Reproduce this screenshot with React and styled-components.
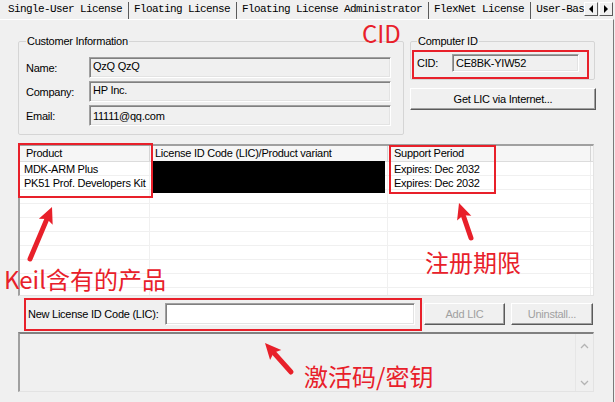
import React from 'react';
import styled, { createGlobalStyle } from 'styled-components';

const RED = '#e8202a';

const GlobalStyle = createGlobalStyle`
  body {
    margin: 0;
    background: #f0f0f0;
    font-family: "Liberation Sans", Arial, sans-serif;
    font-size: 11px;
    letter-spacing: -0.25px;
    color: #000;
  }
  #root {
    position: relative;
    width: 615px;
    height: 402px;
    overflow: hidden;
  }
`;

const Window = styled.div`
  width: 615px;
  height: 402px;
  display: flex;
  flex-direction: column;
`;

const TabStrip = styled.div`
  display: flex;
  height: 19px;
  padding-left: 3px;
`;

const TabList = styled.div`
  display: flex;
  width: 581px;
  overflow: hidden;
`;

const Tab = styled.div`
  flex: none;
  height: 17px;
  margin-top: 2px;
  line-height: 15px;
  padding: 0 6px 0 5px;
  font-family: "Liberation Mono", "DejaVu Sans Mono", monospace;
  font-size: 11px;
  letter-spacing: -0.6px;
  white-space: nowrap;
  border-right: 1px solid #5a5a5a;
`;

const ScrollButtons = styled.div`
  display: flex;
  gap: 1px;
  padding-top: 2px;
`;

const ScrollButton = styled.div`
  width: 14px;
  height: 14px;
  box-sizing: border-box;
  background: #f0f0f0;
  border: 1px solid;
  border-color: #fff #5a5a5a #5a5a5a #fff;
  display: flex;
  align-items: center;
  justify-content: center;
`;

const Triangle = styled.span`
  width: 0;
  height: 0;
  border-top: 4px solid transparent;
  border-bottom: 4px solid transparent;
  ${(p) => (p.$dir === 'left' ? 'border-right: 4px solid #000;' : 'border-left: 4px solid #000;')}
`;

const Page = styled.div`
  flex: 1;
  border-top: 1px solid #fff;
  border-right: 1px solid #7a7a7a;
  margin-right: 1px;
  padding: 15px 0 0 18px;
`;

const TopRow = styled.div`
  display: flex;
  gap: 6px;
  align-items: flex-start;
`;

const GroupBox = styled.fieldset`
  margin: 0;
  min-width: 0;
  box-sizing: border-box;
  width: ${(p) => p.$width}px;
  padding: ${(p) => p.$pad};
  border: 1px solid #d5d5d5;
  border-radius: 2px;
`;

const Legend = styled.legend`
  padding: 0 1px;
  line-height: 13px;
`;

const FieldGrid = styled.div`
  display: grid;
  grid-template-columns: ${(p) => p.$cols};
  row-gap: 3px;
  align-items: center;
`;

const Label = styled.span`
  white-space: nowrap;
`;

const ReadOnlyField = styled.div`
  height: ${(p) => p.$h}px;
  box-sizing: border-box;
  padding: ${(p) => p.$padTop}px 3px 0;
  line-height: 12px;
  background: #f0f0f0;
  border: 1px solid;
  border-color: #a0a0a0 #fff #fff #a0a0a0;
  box-shadow: inset 1px 1px 0 #808080, inset -1px -1px 0 #e3e3e3;
  white-space: nowrap;
`;

const RightColumn = styled.div`
  display: flex;
  flex-direction: column;
  width: 186px;
`;

const Button = styled.div`
  height: ${(p) => p.$h || 22}px;
  width: ${(p) => (p.$w ? `${p.$w}px` : 'auto')};
  margin-top: ${(p) => p.$mt || 0}px;
  margin-left: ${(p) => p.$ml || 0}px;
  box-sizing: border-box;
  background: #f0f0f0;
  border: 1px solid;
  border-color: #fff #5a5a5a #5a5a5a #fff;
  box-shadow: inset -1px -1px 0 #a0a0a0;
  display: flex;
  align-items: center;
  justify-content: center;
  color: ${(p) => (p.$disabled ? '#a0a0a0' : '#000')};
  white-space: nowrap;
`;

const ListView = styled.div`
  position: relative;
  margin-top: 9px;
  width: 576px;
  height: 152px;
  box-sizing: border-box;
  background: #fff;
  border-style: solid;
  border-width: 2px 1px 1px 2px;
  border-color: #a0a0a0 #e3e3e3 #e3e3e3 #a0a0a0;
  overflow: hidden;
  display: grid;
  grid-template-columns: 130px 238px 203px 1fr;
  grid-template-rows: 16px;
  grid-auto-rows: 14px;
  align-content: start;
`;

const HeaderCell = styled.div`
  box-sizing: border-box;
  background: #f6f6f6;
  border-right: 1px solid #d5d5d5;
  border-bottom: 1px solid #dcdcdc;
  padding-left: ${(p) => p.$pl || 6}px;
  line-height: 15px;
  white-space: nowrap;
  overflow: hidden;
`;

const Cell = styled.div`
  box-sizing: border-box;
  border-right: 1px solid #f0f0f0;
  border-bottom: 1px solid #f0f0f0;
  padding-left: ${(p) => p.$pl || 4}px;
  line-height: 14px;
  white-space: nowrap;
  overflow: hidden;
`;

const Redaction = styled.div`
  position: absolute;
  left: 133px;
  top: 15px;
  width: 232px;
  height: 32px;
  background: #000;
`;

const BottomRow = styled.div`
  display: flex;
  align-items: center;
  margin-top: 7px;
  padding-left: 10px;
  height: 22px;
`;

const LicLabel = styled.span`
  width: 137px;
  white-space: nowrap;
`;

const TextInput = styled.div`
  width: 250px;
  height: 22px;
  box-sizing: border-box;
  background: #fff;
  border: 1px solid;
  border-color: #a0a0a0 #fff #fff #a0a0a0;
  box-shadow: inset 1px 1px 0 #808080, inset -1px -1px 0 #e3e3e3;
`;

const LogBox = styled.div`
  margin-top: 7px;
  width: 576px;
  height: 60px;
  box-sizing: border-box;
  background: #f0f0f0;
  border-style: solid;
  border-width: 2px 1px 1px 2px;
  border-color: #808080 #e3e3e3 #e3e3e3 #a0a0a0;
  display: flex;
  justify-content: flex-end;
`;

const ScrollBar = styled.div`
  width: 17px;
  border-left: 1px solid #e6e6e6;
  display: flex;
  flex-direction: column;
  justify-content: space-between;
  align-items: center;
  padding: 9px 0 5px;
`;

const Overlay = styled.div`
  position: absolute;
  inset: 0;
  pointer-events: none;
`;

const RedBox = styled.div`
  position: absolute;
  left: ${(p) => p.$x}px;
  top: ${(p) => p.$y}px;
  width: ${(p) => p.$w}px;
  height: ${(p) => p.$h}px;
  box-sizing: border-box;
  border: 2px solid ${RED};
`;

const Note = styled.div`
  position: absolute;
  left: ${(p) => p.$x}px;
  top: ${(p) => p.$y}px;
  font-family: "Noto Sans CJK SC", "Noto Sans", sans-serif;
  font-size: ${(p) => p.$size || 24}px;
  line-height: 1;
  letter-spacing: 0;
  color: ${RED};
  white-space: nowrap;
`;

const ArrowSvg = styled.svg`
  position: absolute;
  left: 0;
  top: 0;
`;

const Chevron = ({ up }) => (
  <svg width="9" height="6" viewBox="0 0 9 6">
    <polyline
      points={up ? '1,5 4.5,1.5 8,5' : '1,1 4.5,4.5 8,1'}
      fill="none"
      stroke="#b4b4b4"
      strokeWidth="1.3"
    />
  </svg>
);

const Arrow = ({ tail, tip, head = 16, headW = 15, width = 5 }) => {
  const dx = tip[0] - tail[0];
  const dy = tip[1] - tail[1];
  const len = Math.hypot(dx, dy);
  const ux = dx / len;
  const uy = dy / len;
  const nx = -uy;
  const ny = ux;
  const bx = tip[0] - ux * head;
  const by = tip[1] - uy * head;
  const pts = [
    [bx + nx * headW / 2, by + ny * headW / 2],
    tip,
    [bx - nx * headW / 2, by - ny * headW / 2],
    [bx + ux * 3, by + uy * 3],
  ].map((p) => p.join(',')).join(' ');
  return (
    <g>
      <line
        x1={tail[0]} y1={tail[1]} x2={bx + ux * 2} y2={by + uy * 2}
        stroke={RED} strokeWidth={width} strokeLinecap="round"
      />
      <polygon points={pts} fill={RED} />
    </g>
  );
};

const tabs = [
  'Single-User License',
  'Floating License',
  'Floating License Administrator',
  'FlexNet License',
  'User-Based License',
];

const rows = [
  ['MDK-ARM Plus', '', 'Expires: Dec 2032'],
  ['PK51 Prof. Developers Kit', '', 'Expires: Dec 2032'],
  ...Array.from({ length: 8 }, () => ['', '', '']),
];

export default function App() {
  return (
    <>
      <GlobalStyle />
      <Window>
        <TabStrip>
          <TabList>
            {tabs.map((t) => <Tab key={t}>{t}</Tab>)}
          </TabList>
          <ScrollButtons>
            <ScrollButton><Triangle $dir="left" /></ScrollButton>
            <ScrollButton><Triangle $dir="right" /></ScrollButton>
          </ScrollButtons>
        </TabStrip>

        <Page>
          <TopRow>
            <GroupBox $width={386} $pad="9px 10px 8px 7px">
              <Legend>Customer Information</Legend>
              <FieldGrid $cols="63px 302px">
                <Label>Name:</Label>
                <ReadOnlyField $h={21} $padTop={2}>QzQ QzQ</ReadOnlyField>
                <Label>Company:</Label>
                <ReadOnlyField $h={21} $padTop={2}>HP Inc.</ReadOnlyField>
                <Label>Email:</Label>
                <ReadOnlyField $h={21} $padTop={4}>11111@qq.com</ReadOnlyField>
              </FieldGrid>
            </GroupBox>

            <RightColumn>
              <GroupBox $width={185} $pad="6px 8px 7px 6px">
                <Legend>Computer ID</Legend>
                <FieldGrid $cols="35px 127px">
                  <Label>CID:</Label>
                  <ReadOnlyField $h={18} $padTop={2}>CE8BK-YIW52</ReadOnlyField>
                </FieldGrid>
              </GroupBox>
              <Button $mt={8} $h={22}>Get LIC via Internet...</Button>
            </RightColumn>
          </TopRow>

          <ListView>
            <HeaderCell>Product</HeaderCell>
            <HeaderCell $pl={5}>License ID Code (LIC)/Product variant</HeaderCell>
            <HeaderCell>Support Period</HeaderCell>
            <HeaderCell />
            {rows.map((r, i) => (
              <React.Fragment key={i}>
                <Cell>{r[0]}</Cell>
                <Cell>{r[1]}</Cell>
                <Cell $pl={6}>{r[2]}</Cell>
                <Cell />
              </React.Fragment>
            ))}
            <Redaction />
          </ListView>

          <BottomRow>
            <LicLabel>New License ID Code (LIC):</LicLabel>
            <TextInput />
            <Button $w={81} $ml={9} $disabled>Add LIC</Button>
            <Button $w={82} $ml={6} $disabled>Uninstall...</Button>
          </BottomRow>

          <LogBox>
            <ScrollBar>
              <Chevron up />
              <Chevron />
            </ScrollBar>
          </LogBox>
        </Page>
      </Window>

      <Overlay>
        <RedBox $x={412} $y={50} $w={177} $h={29} />
        <RedBox $x={18} $y={143} $w={135} $h={55} />
        <RedBox $x={389} $y={145} $w={107} $h={49} />
        <RedBox $x={24} $y={298} $w={398} $h={33} />

        <Note $x={362} $y={21}>CID</Note>
        <Note $x={4} $y={267}>Keil含有的产品</Note>
        <Note $x={425} $y={250}>注册期限</Note>
        <Note $x={304} $y={364}>激活码/密钥</Note>

        <ArrowSvg width="615" height="402">
          <Arrow tail={[30, 259]} tip={[52, 207]} />
          <Arrow tail={[471, 238]} tip={[459, 203]} />
          <Arrow tail={[291, 372]} tip={[265, 343]} />
        </ArrowSvg>
      </Overlay>
    </>
  );
}
